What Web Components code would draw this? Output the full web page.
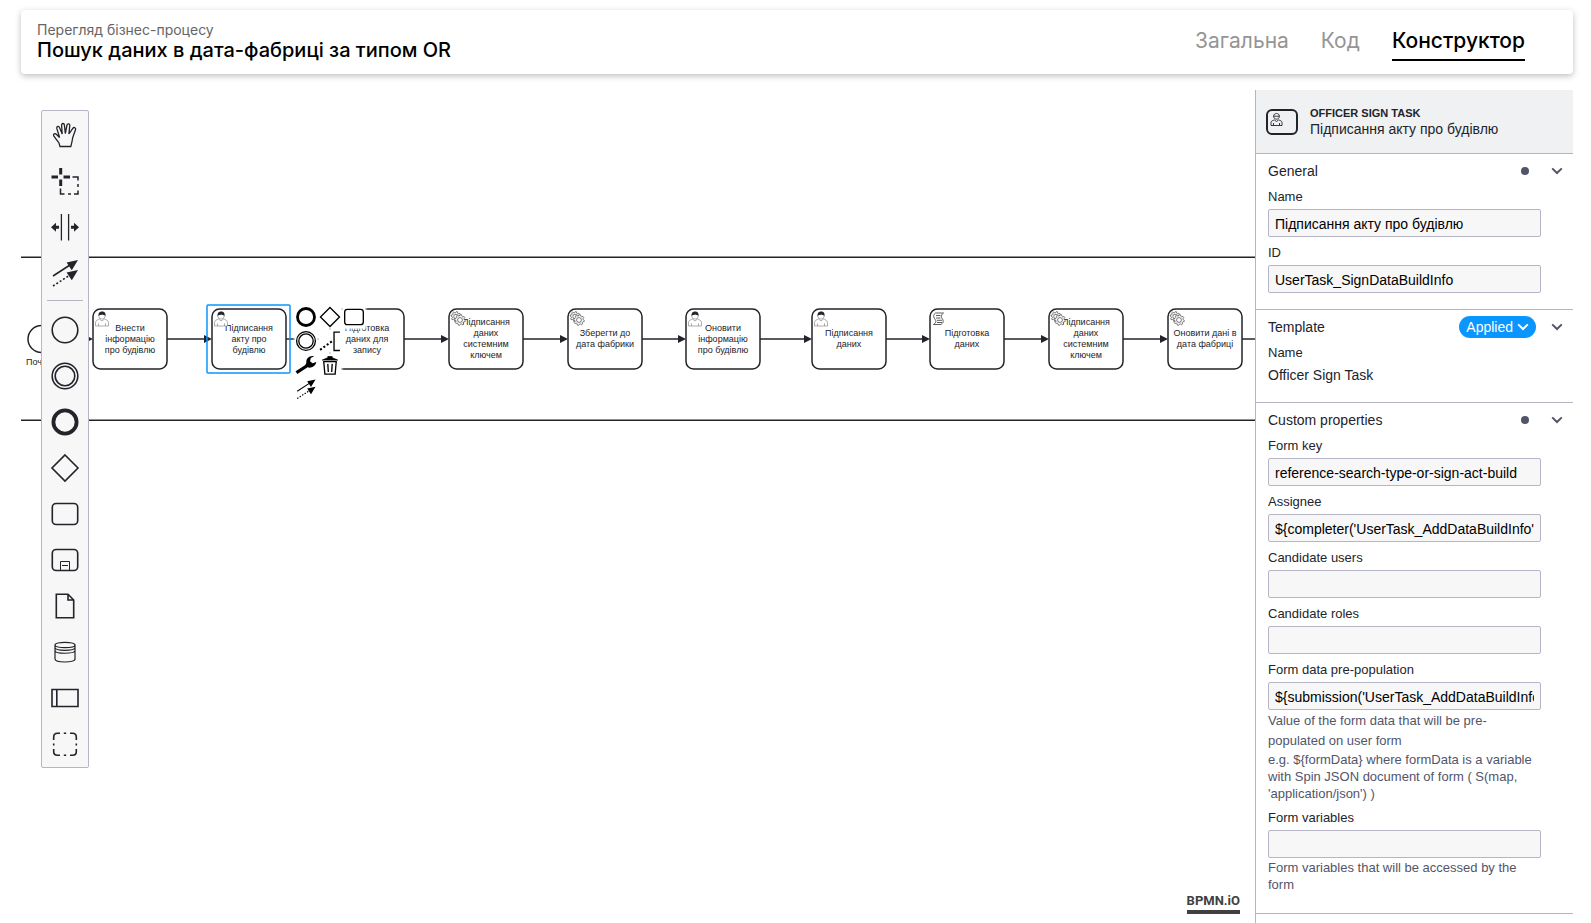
<!DOCTYPE html>
<html lang="uk">
<head>
<meta charset="utf-8">
<title>Пошук даних в дата-фабриці за типом OR</title>
<style>
  body { margin: 0; font-family: "Liberation Sans", Arial, sans-serif; color: #22242a; background: #fff; }
</style>
</head>
<body>
<process-page></process-page>

<script>
const define = (name, html, setup) => {
  const template = document.createElement('template');
  template.innerHTML = html;
  customElements.define(name, class extends HTMLElement {
    connectedCallback() {
      if (this.shadowRoot) return;
      this.attachShadow({ mode: 'open' }).append(template.content.cloneNode(true));
      if (setup) setup(this, this.shadowRoot);
    }
  });
};

/* Glyphs share a 30 x 30 grid. */
const arrowHead = (x, y) => `<path fill="currentColor" stroke="none" d="M${x} ${y}l-6.2 10.2-5.2-7.8z"/>`;
const glyphs = {
  hand: '<path stroke-width="1.3" d="M10 26.5 9 23C7 20 5 18 3.6 15.6 3 14 5 13 6.3 14.3L9.6 17.5 6.8 8.4C6.3 6.4 8.8 5.6 9.5 7.5L12.2 14 11.6 5C11.6 3 14.2 3 14.4 5L15.3 13.5 17 5C17.5 3.2 20 3.6 19.8 5.5L18.9 14 22.8 8.3C24 6.6 26.3 8 25.5 9.8L22.6 18C22.4 21 21.6 23 20.8 26.5z"/>',
  lasso: '<path stroke-width="3" d="M1.5 11H8M13.5 11H20M10.7 2V8.5M10.7 13.5V20"/><path stroke-width="1.5" d="M22.5 11H28V14.5M28 18V21M28 24.5V28H24M21 28H18M14.5 28H10.5V22.5"/>',
  space: '<path stroke-width="1.3" d="M11.4 2V28.6M18.6 2V28.6"/><path fill="currentColor" stroke="none" d="M1 15.2 6 10.7V13.7H9V16.7H6V19.7zM29 15.2 24 10.7V13.7H21V16.7H24V19.7z"/>',
  connect: `<path stroke-width="1.5" d="M3 18 20 7"/><path stroke-width="1.6" stroke-dasharray="2 2" d="M3 28 20 17"/>${arrowHead(28, 2)}${arrowHead(28, 12)}`,
  start: '<circle cx="15" cy="15" r="12.8"/>',
  middle: '<circle cx="15" cy="15" r="12.8"/><circle cx="15" cy="15" r="9.8"/>',
  end: '<circle cx="15" cy="15" r="11.6" stroke-width="3.8"/>',
  gateway: '<path d="M15 2 28 15 15 28 2 15z"/>',
  task: '<rect x="2.3" y="4.5" width="25.4" height="21" rx="3.8"/>',
  subprocess: '<rect x="2.3" y="4.5" width="25.4" height="21" rx="3.8"/><path stroke-width="1" d="M10.5 25V16.5H19.5V25M12 20.5H18"/>',
  data: '<path d="M6.3 3.3H18L23.7 9V26.7H6.3zM18 3.3V9H23.7"/>',
  store: '<path stroke-width="1.2" d="M5 8V22C5 26 25 26 25 22V8M5 8C5 4.4 25 4.4 25 8 25 11.6 5 11.6 5 8M5 10.6C5 14.4 25 14.4 25 10.6M5 13.4C5 17.2 25 17.2 25 13.4"/>',
  pool: '<path d="M2 6.5H28V23.5H2zM6.8 6.5V23.5"/>',
  group: '<path d="M3.7 11V8Q3.7 4.2 7.5 4.2H10M20 4.2H22.5Q26.3 4.2 26.3 8V11M26.3 20V22.7Q26.3 26.2 22.5 26.2H20M10 26.2H7.5Q3.7 26.2 3.7 22.7V20M13.8 4.2H16.2M13.8 26.2H16.2M3.7 14.5V16.5M26.3 14.5V16.5"/>',
  note: '<path d="M28.5 3H20.5V28H28.5"/><path stroke-width="2.8" stroke-dasharray="2.8 2.8" d="M1.500 27 19 14.500"/>',
  wrench: '<path stroke-width="4.4" d="M2 25.5 18 15"/><path fill="currentColor" stroke="none" d="M26 3C20 1.5 14.5 6 15.5 12L14 15.5 18 18.5C23 19.5 28.5 16 29 11L24 12.5 20.5 10 21.5 5.5z"/>',
  trash: '<path d="M6.500 10.500 8 27.500H22L23.500 10.500zM12 13.500 12.700 24.500M18 13.500 17.300 24.500"/><path fill="currentColor" stroke-width="1" d="M4.500 8.300 12 5V3.500H18V5L25.500 8.300z"/>'
};
const glyph = name =>
  `<svg viewBox="0 0 30 30" fill="none" stroke="currentColor" aria-hidden="true">${glyphs[name]}</svg>`;
const chevron =
  '<svg class="chevron" viewBox="0 0 12 8" fill="none" stroke="currentColor" stroke-width="2" aria-hidden="true"><path d="M1.2 1.4 6 6 10.8 1.4"/></svg>';

define('process-page', `
  <style>
    :host { display: flex; flex-direction: column; gap: 16px; box-sizing: border-box; height: 100vh; padding: 10px 18px 0 21px; overflow: hidden; }
    main { display: flex; flex: 1; min-height: 0; }
    bpmn-canvas { flex: 1; min-width: 0; }
    properties-panel { flex: none; }
  </style>
  <process-header>
    <span slot="kicker">Перегляд бізнес-процесу</span>
    <span slot="title">Пошук даних в дата-фабриці за типом OR</span>
    <a slot="tab" href="#general">Загальна</a>
    <a slot="tab" href="#code">Код</a>
    <a slot="tab" href="#designer" aria-current="page">Конструктор</a>
  </process-header>
  <main>
    <bpmn-canvas></bpmn-canvas>
    <properties-panel></properties-panel>
  </main>`);

define('process-header', `
  <style>
    :host { display: flex; align-items: center; justify-content: space-between; box-sizing: border-box; height: 64px; padding: 0 48px 0 16px;
      border-radius: 4px; background: #fff; box-shadow: 0 2px 6px rgba(0, 0, 0, .26); font-family: Inter, sans-serif; }
    p, h1 { margin: 0; }
    p { font-size: 14px; line-height: 16px; color: #666; }
    h1 { font-size: 20px; line-height: 24px; font-weight: 500; color: #000; }
    nav { display: flex; gap: 32px; padding-bottom: 2px; }
    ::slotted(a) { padding: 6px 0 4px; border-bottom: 2px solid transparent; font-size: 21px; line-height: 28px; color: #959595; text-decoration: none; }
    ::slotted(a[aria-current]) { border-color: #000; color: #000; font-weight: 500; }
  </style>
  <div>
    <p><slot name="kicker"></slot></p>
    <h1><slot name="title"></slot></h1>
  </div>
  <nav><slot name="tab"></slot></nav>`);

/* Diagram */
const gear = (cx, cy, r) => {
  const pts = [];
  for (let i = 0; i < 32; i++) {
    const radius = i % 4 < 2 ? r : r - 1.3, a = (i + .5) * Math.PI / 16;
    pts.push((cx + radius * Math.cos(a)).toFixed(2) + ' ' + (cy + radius * Math.sin(a)).toFixed(2));
  }
  return `<path d="M${pts.join('L')}z"/><circle cx="${cx}" cy="${cy}" r="${r * .45}"/>`;
};
const markers = {
  user: '<g stroke="#777" stroke-width=".6"><path d="M1.5 15V11.5C1.5 9.5 4 8.6 5.5 8L8 10 10.5 8C12 8.6 14.5 9.5 14.5 11.5V15zM4.5 15V12.3M11.5 15V12.3"/><circle cx="8" cy="4.8" r="3.3"/></g><path fill="#22242a" d="M4.6 5C4.2 1 7 .5 8 .6 10 .5 12 1.5 11.4 5 10.5 3.4 9 4.2 8 3.4 7 4.2 5.500 3.600 4.600 5z"/>',
  service: `<g stroke="#444" stroke-width=".7">${gear(6, 5.5, 5)}${gear(10, 9, 5.4)}</g>`,
  script: '<g stroke="#333" stroke-width=".8"><path d="M4.5 2H12.5C9.5 4.5 10 6 11.5 8 13 10.5 12 12 10 13.5H2.5C6 11 5 9.5 3.5 7.5 2 5 2.5 3.5 4.5 2zM5 4.5H9.5M5 7H9.5M6 9.3H11M6 11.5H11"/></g>'
};
const TOP = 219, W = 74, H = 60;
const tasks = [
  [72, 'user', 'Внести', 'інформацію', 'про будівлю'],
  [191, 'user', 'Підписання', 'акту про', 'будівлю'],
  [309, '', 'Підготовка', 'даних для', 'запису'],
  [428, 'service', 'Підписання', 'даних', 'системним', 'ключем'],
  [547, 'service', 'Зберегти до', 'дата фабрики'],
  [665, 'user', 'Оновити', 'інформацію', 'про будівлю'],
  [791, 'user', 'Підписання', 'даних'],
  [909, 'script', 'Підготовка', 'даних'],
  [1028, 'service', 'Підписання', 'даних', 'системним', 'ключем'],
  [1147, 'service', 'Оновити дані в', 'дата фабриці']
];
const drawTask = ([x, type, ...lines]) => {
  const first = 252 - Math.round((lines.length - 1) * 5.5);
  return `<rect x="${x}" y="${TOP}" width="${W}" height="${H}" rx="7.5" fill="#fff" stroke="#22242a" stroke-width="1.5"/>
    <text text-anchor="middle">${lines.map((t, i) => `<tspan x="${x + W / 2}" y="${first + i * 11}">${t}</tspan>`).join('')}</text>
    <g transform="translate(${x + 1} ${TOP + 2})" fill="#fff">${markers[type] || ''}</g>`;
};
const flow = (from, to) =>
  `<path stroke="#22242a" stroke-width="1.3" d="M${from} 249H${to - 4}"/><path fill="#22242a" d="M${to} 249l-8-4v8z"/>`;

define('bpmn-canvas', `
  <style>
    :host { display: block; position: relative; overflow: hidden; }
    .diagram { display: block; width: 100%; height: 100%; font: 9px "Liberation Sans", Arial, sans-serif; fill: #22242a; }
    bpmn-palette { position: absolute; left: 20px; top: 20px; }
    context-pad { position: absolute; left: 274px; top: 216px; }
    .logo { position: absolute; right: 15px; bottom: 9px; border-bottom: 4px solid #404040; color: #404040;
      font: bold 13px/18px Roboto, sans-serif; text-decoration: none; }
  </style>
  <svg class="diagram" role="img" aria-label="Діаграма бізнес-процесу"></svg>
  <bpmn-palette></bpmn-palette>
  <context-pad></context-pad>
  <a class="logo" href="#bpmn-io">BPMN.iO</a>`,
  (host, root) => {
    const flows = tasks.map(([x], i) => flow(i ? tasks[i - 1][0] + W : 33, x)).join('');
    root.querySelector('.diagram').innerHTML = `
      <path stroke="#22242a" stroke-width="1.5" d="M0 167.3H3000M0 330.3H3000"/>
      <circle cx="20.5" cy="249" r="13.5" fill="#fff" stroke="#22242a" stroke-width="1.5"/>
      <text x="5" y="275">Початок</text>
      ${flows}<path stroke="#22242a" stroke-width="1.3" d="M1221 249H3000"/>
      ${tasks.map(drawTask).join('')}
      <rect x="186" y="215" width="83" height="68" rx="1" fill="none" stroke="#0a96ff" stroke-width="1.5"/>`;
  });

define('bpmn-palette', `
  <style>
    :host { display: flex; flex-direction: column; align-items: center; box-sizing: border-box; width: 48px; padding: 1px 0 0;
      border: 1px solid #b6b5c6; border-radius: 2px; background: #f7f7f8; color: #22242a; }
    button { display: grid; place-items: center; width: 46px; height: 46px; padding: 0; border: 0; background: none; color: inherit; }
    svg { width: 30px; height: 30px; stroke-width: 1.6; }
    hr { width: 36px; height: 1px; margin: 4px 0 6px; border: 0; background: #b6b5c6; }
  </style>`,
  (host, root) => {
    const button = ([name, label]) => `<button type="button" aria-label="${label}">${glyph(name)}</button>`;
    const tools = [['hand', 'Hand tool'], ['lasso', 'Lasso tool'], ['space', 'Space tool'], ['connect', 'Connect tool']];
    const shapes = [['start', 'Start event'], ['middle', 'Intermediate event'], ['end', 'End event'], ['gateway', 'Gateway'], ['task', 'Task'],
      ['subprocess', 'Sub-process'], ['data', 'Data object'], ['store', 'Data store'], ['pool', 'Participant'], ['group', 'Group']];
    const holder = document.createElement('template');
    holder.innerHTML = tools.map(button).join('') + '<hr>' + shapes.map(button).join('');
    root.append(holder.content);
  });

define('context-pad', `
  <style>
    :host { display: grid; grid-template-columns: repeat(3, 22px); gap: 2px; color: #000; }
    button { width: 22px; height: 22px; padding: 0; border: 0; background: #fff; box-shadow: 0 0 2px 1px #fff; color: inherit; }
    button:nth-of-type(2n + 4) { grid-column: 1; }
    svg { display: block; width: 22px; height: 22px; stroke-width: 1.8; }
  </style>
  ${[['end', 'Append end event'], ['gateway', 'Append gateway'], ['task', 'Append task'], ['middle', 'Append intermediate event'],
     ['note', 'Append text annotation'], ['wrench', 'Change type'], ['trash', 'Remove'], ['connect', 'Connect']]
    .map(([name, label]) => `<button type="button" aria-label="${label}">${glyph(name)}</button>`).join('')}`);

/* Properties */
define('properties-panel', `
  <style>
    :host { display: block; box-sizing: border-box; width: 318px; overflow: hidden; border-left: 1px solid #b6b5c6; background: #fff; }
    header { display: flex; align-items: center; gap: 12px; height: 63px; padding: 0 10px; border-bottom: 1px solid #b6b5c6; background: #eff1f3; }
    header svg { flex: none; width: 32px; height: 26px; }
    header div { padding-bottom: 1px; }
    h2, p { margin: 0; font-size: 14px; line-height: 16px; font-weight: 400; }
    h2 { font-size: 11px; font-weight: 700; }
    .roomy { line-height: 20px; }
    property-group:last-of-type { padding-bottom: 20px; }
  </style>
  <header>
    <svg viewBox="0 0 32 26" fill="none" stroke="#22242a" aria-hidden="true">
      <rect x="1" y="1" width="30" height="24" rx="5" stroke-width="2"/>
      <path d="M5 16.5V13.5C5 12 7 11.3 8.5 11L10.5 12.5 12.5 11C14 11.3 16 12 16 13.5V16.5zM7.5 16.5V14M13.5 16.5V14M7.6 7.5C7.3 3.5 13.7 3.5 13.4 7.5 13 11 8 11 7.6 7.5 9 6.5 12 8 13.4 7" stroke-width=".9"/>
    </svg>
    <div>
      <h2>OFFICER SIGN TASK</h2>
      <p>Підписання акту про будівлю</p>
    </div>
  </header>
  <property-group heading="General" edited>
    <property-field label="Name" value="Підписання акту про будівлю"></property-field>
    <property-field label="ID" value="UserTask_SignDataBuildInfo"></property-field>
  </property-group>
  <property-group heading="Template" badge="Applied">
    <property-field label="Name"><span slot="value">Officer Sign Task</span></property-field>
  </property-group>
  <property-group heading="Custom properties" edited>
    <property-field label="Form key" value="reference-search-type-or-sign-act-build"></property-field>
    <property-field label="Assignee" value="\${completer('UserTask_AddDataBuildInfo')}"></property-field>
    <property-field label="Candidate users" value=""></property-field>
    <property-field label="Candidate roles" value=""></property-field>
    <property-field label="Form data pre-population" value="\${submission('UserTask_AddDataBuildInfo').formData}">
      <div class="roomy">Value of the form data that will be pre-populated on user form</div>
      <div>e.g. \${formData} where formData is a variable with Spin JSON document of form ( S(map, 'application/json') )</div>
    </property-field>
    <property-field label="Form variables" value="">Form variables that will be accessed by the form</property-field>
  </property-group>`);

define('property-group', `
  <style>
    :host { display: block; padding: 0 32px 16px 12px; border-bottom: 1px solid #b6b5c6; }
    .head { display: flex; align-items: center; box-sizing: border-box; height: 35px; margin-right: -22px; padding-bottom: 2px; }
    h3 { flex: 1; margin: 0; font-size: 14px; line-height: 20px; font-weight: 400; }
    .dot { width: 8px; height: 8px; margin-right: 22px; border-radius: 50%; background: #52556a; }
    button { display: flex; align-items: center; padding: 0; border: 0; background: none; color: #52556a; }
    .badge { gap: 4px; height: 22px; margin-right: 15px; padding: 0 7px; border-radius: 11px; background: #0a96ff; color: #fff; font: 14px "Liberation Sans", Arial, sans-serif; }
    .chevron { width: 12px; height: 8px; }
    .body { display: grid; gap: 8px; }
    [hidden] { display: none; }
  </style>
  <div class="head">
    <h3></h3>
    <span class="dot" hidden></span>
    <button class="badge" type="button" hidden><span></span>${chevron}</button>
    <button type="button" class="toggle" aria-label="Toggle section">${chevron}</button>
  </div>
  <div class="body"><slot></slot></div>`,
  (host, root) => {
    root.querySelector('h3').textContent = host.getAttribute('heading');
    root.querySelector('.dot').hidden = !host.hasAttribute('edited');
    const badge = root.querySelector('.badge');
    if (host.hasAttribute('badge')) {
      badge.hidden = false;
      badge.firstElementChild.textContent = host.getAttribute('badge');
    }
  });

define('property-field', `
  <style>
    :host { display: block; font-size: 13px; line-height: 17px; color: #52556a; }
    label { display: block; margin-bottom: 4px; font-size: 13px; line-height: 16px; color: #22242a; }
    input { display: block; box-sizing: border-box; width: 100%; height: 28px; margin: 0 0 1px; padding: 3px 6px 1px; border: 1px solid #b6b5c6; border-radius: 2px;
      background: #f7f7f8; color: #000; font: 14px "Liberation Sans", Arial, sans-serif; }
    :host(:empty) input { margin: 0; }
    ::slotted([slot="value"]) { display: block; font-size: 14px; line-height: 21px; color: #22242a; }
  </style>
  <label for="input"></label>
  <slot name="value"></slot>
  <input id="input" type="text">
  <slot></slot>`,
  (host, root) => {
    const input = root.querySelector('input');
    root.querySelector('label').textContent = host.getAttribute('label');
    if (host.hasAttribute('value')) input.value = host.getAttribute('value');
    else input.remove();
  });
</script>
</body>
</html>
